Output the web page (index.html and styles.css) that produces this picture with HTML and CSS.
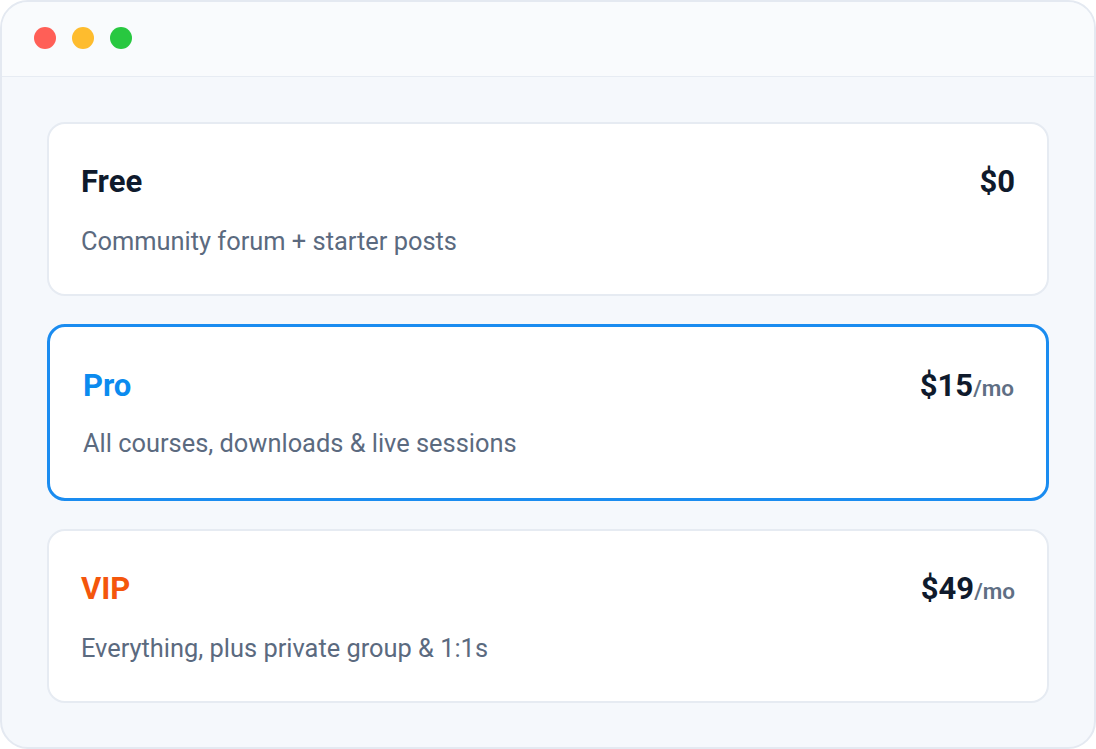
FILE: index.html
```html
<!DOCTYPE html>
<html lang="en">
<head>
    <meta charset="UTF-8">
    <meta name="viewport" content="width=device-width, initial-scale=1.0">
    <title>Membership plans</title>
    <link rel="stylesheet" href="styles.css">
</head>
<body>
    <div class="window">
        <div class="titlebar">
            <span class="dot red"></span>
            <span class="dot yellow"></span>
            <span class="dot green"></span>
        </div>
        <div class="plans">
            <div class="plan">
                <div class="plan-head">
                    <span class="plan-name">Free</span>
                    <span class="plan-price">$0</span>
                </div>
                <p class="plan-desc">Community forum + starter posts</p>
            </div>
            <div class="plan selected">
                <div class="plan-head">
                    <span class="plan-name pro">Pro</span>
                    <span class="plan-price">$15<small>/mo</small></span>
                </div>
                <p class="plan-desc">All courses, downloads &amp; live sessions</p>
            </div>
            <div class="plan">
                <div class="plan-head">
                    <span class="plan-name vip">VIP</span>
                    <span class="plan-price">$49<small>/mo</small></span>
                </div>
                <p class="plan-desc">Everything, plus private group &amp; 1:1s</p>
            </div>
        </div>
    </div>
</body>
</html>
```

FILE: styles.css
```css
/* base */
* {
    box-sizing: border-box;
}

body {
    margin: 0;
    font-family: Roboto, "Liberation Sans", Arial, sans-serif;
    background-color: #ffffff;
}

.window {
    height: 749px;
    border: 2px solid #e4e9f1;
    border-radius: 28px;
    background-color: #f5f8fc;
    overflow: hidden;
}

.titlebar {
    height: 75px;
    display: flex;
    align-items: center;
    gap: 16px;
    padding-left: 32px;
    padding-bottom: 2px;
    background-color: #f9fbfd;
    border-bottom: 1px solid #e7ecf3;
}

.dot {
    width: 22px;
    height: 22px;
    border-radius: 50%;
}

.dot.red { background-color: #ff5f57; }
.dot.yellow { background-color: #febc2e; }
.dot.green { background-color: #28c840; }

/* plan cards */
.plans {
    display: flex;
    flex-direction: column;
    gap: 28px;
    padding: 45px 45px 0;
}

.plan {
    height: 174px;
    background-color: #fff;
    border: 2px solid #e6ebf2;
    border-radius: 18px;
    padding: 39px 32px 0;
}

.plan.selected {
    height: 177px;
    border: 3px solid #1a8cf0;
    padding: 40px 32px 0 33px;
}

.plan-head {
    display: flex;
    justify-content: space-between;
    align-items: baseline;
}

.plan-name {
    font-size: 31px;
    font-weight: 700;
    color: #0f1a2c;
}

.plan-name.pro { color: #0b8bef; }
.plan-name.vip { color: #f4560c; }

.plan-price {
    font-size: 31px;
    font-weight: 700;
    color: #0f1a2c;
}

.plan-price small {
    font-size: 22.5px;
    font-weight: 600;
    color: #5f6f84;
}

.plan-desc {
    margin: 26px 0 0;
    font-size: 25.4px;
    color: #5b6a7f;
}

.plan.selected .plan-desc {
    margin-top: 24px;
}
```
